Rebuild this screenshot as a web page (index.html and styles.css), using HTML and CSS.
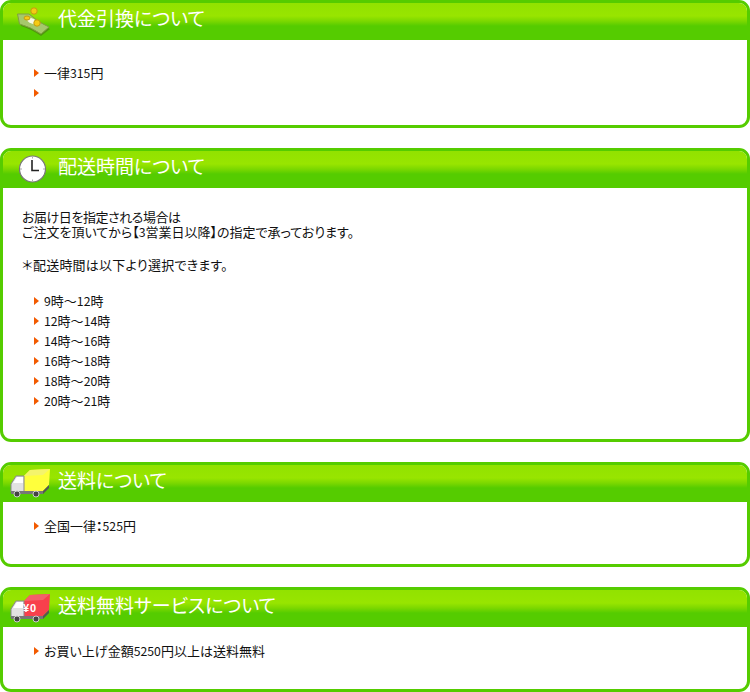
FILE: index.html
```html
<!DOCTYPE html>
<html lang="ja">
<head>
<meta charset="utf-8">
<title>配送について</title>
<link rel="stylesheet" href="styles.css">
</head>
<body>
<section class="card card-cod">
  <h2 class="head">
    <svg class="icon" width="40" height="36" viewBox="0 0 40 36"><path d="M9 14 L20 14 Q30 22 40 26 L31 33 Q21 26 11 23 Z" fill="#4f8a10" opacity=".8"/><path d="M7.500 11 L19 11 Q29 20 39 24 L31 31 Q21 24 9.500 21 Z" fill="#a6c86c" stroke="#7f9f42"/><ellipse cx="22" cy="18" rx="5" ry="2.500" fill="#f6f9e6" transform="rotate(25 22 18)"/><circle cx="24" cy="8" r="3.200" fill="#f5cb14" stroke="#c49c10"/><ellipse cx="17" cy="15" rx="3" ry="2" fill="#f5cb14" stroke="#c49c10"/><circle cx="27" cy="20" r="3.200" fill="#f5cb14" stroke="#c49c10"/></svg>
    <span class="title">代金引換について</span>
  </h2>
  <div class="body">
    <ul class="list">
      <li>一律<span class="num">315</span>円</li>
      <li></li>
    </ul>
  </div>
</section>

<section class="card card-time">
  <h2 class="head">
    <svg class="icon" width="40" height="36" viewBox="0 0 40 36"><circle cx="22.500" cy="18" r="13" fill="#fff" stroke="#777" stroke-width="1.200"/><path d="M22 9 V19.500 H29" fill="none" stroke="#222" stroke-width="1.600"/><path d="M22.500 5.500v2M22.500 28.500v2M10 18h2M33 18h2" stroke="#aaa"/></svg>
    <span class="title">配送時間について</span>
  </h2>
  <div class="body">
    <p class="note"><span class="tight">お届け日を指定される場合は</span><br>ご注文を頂いてから【<span class="num">3</span>営業日以降】の指定で承っております。</p>
    <p class="note wide">＊配送時間は以下より選択できます。</p>
    <ul class="list">
      <li><span class="num">9</span>時～<span class="num">12</span>時</li>
      <li><span class="num">12</span>時～<span class="num">14</span>時</li>
      <li><span class="num">14</span>時～<span class="num">16</span>時</li>
      <li><span class="num">16</span>時～<span class="num">18</span>時</li>
      <li><span class="num">18</span>時～<span class="num">20</span>時</li>
      <li><span class="num">20</span>時～<span class="num">21</span>時</li>
    </ul>
  </div>
</section>

<section class="card card-fee">
  <h2 class="head">
    <svg class="icon" width="40" height="36" viewBox="0 0 40 36"><path d="M14 11 L20 5 L40 4 L39 20 L33 26 H14 Z" fill="#ffff3c"/><path d="M20 5 L40 4 L33 10 L14 11 Z" fill="#f4f46c"/><path d="M33 26 L39 20 V23 L33 29 Z" fill="#555"/><path d="M1 27 V19 L6 11 H14 V27 Z" fill="#e2e2e2" stroke="#888"/><path d="M3 18 L7 12 H13 V18 Z" fill="#fff"/><path d="M1 26 H33 V29 H1 Z" fill="#777"/><circle cx="7" cy="29" r="3" fill="#444" stroke="#ccc"/><circle cx="26" cy="29" r="3" fill="#444" stroke="#ccc"/></svg>
    <span class="title">送料について</span>
  </h2>
  <div class="body">
    <ul class="list">
      <li>全国一律<span class="colon">：</span><span class="num">525</span>円</li>
    </ul>
  </div>
</section>

<section class="card card-free">
  <h2 class="head">
    <svg class="icon" width="40" height="36" viewBox="0 0 40 36"><path d="M14 11 L20 5 L40 4 L39 20 L33 26 H14 Z" fill="#f8404c"/><path d="M20 5 L40 4 L33 10 L14 11 Z" fill="#f4606a"/><path d="M33 26 L39 20 V23 L33 29 Z" fill="#555"/><path d="M1 27 V19 L6 11 H14 V27 Z" fill="#e2e2e2" stroke="#888"/><path d="M3 18 L7 12 H13 V18 Z" fill="#fff"/><path d="M1 26 H33 V29 H1 Z" fill="#777"/><circle cx="7" cy="29" r="3" fill="#444" stroke="#ccc"/><circle cx="26" cy="29" r="3" fill="#444" stroke="#ccc"/><text x="13" y="22" class="yen">¥0</text></svg>
    <span class="title">送料無料サービスについて</span>
  </h2>
  <div class="body">
    <ul class="list">
      <li>お買い上げ金額<span class="num">5250</span>円以上は送料無料</li>
    </ul>
  </div>
</section>
</body>
</html>
```
FILE: styles.css
```css
html, body { margin: 0; padding: 0; background: #fff; }
body {
  width: 750px;
  font-family: "Noto Sans CJK JP", "Liberation Sans", sans-serif;
  font-size: 13px;
  font-feature-settings: "palt";
  color: #111;
}
.card {
  box-sizing: border-box;
  width: 750px;
  border: 3px solid #55cc00;
  border-radius: 11px;
  overflow: hidden;
  margin: 0 0 20px;
}
.card-cod { height: 128px; }
.card-time { height: 294px; }
.card-fee { height: 105px; }
.card-free { height: 105px; margin-bottom: 0; }

.head {
  display: flex;
  align-items: flex-start;
  gap: 8px;
  height: 37px;
  margin: 0;
  padding: 0 0 0 7px;
  font-size: 19px;
  font-weight: 400;
  color: #fff;
  background: linear-gradient(#92e200 0, #98e500 13px, #7cd800 18px, #55cc00 23px);
}
.icon { flex: none; }
.title { line-height: 30px; }
.yen { font: bold 11px "Liberation Sans", sans-serif; fill: #fff; letter-spacing: 1px; }

.num { font-size: 12.25px; line-height: 0; }
.colon { font-weight: 700; }
.tight { letter-spacing: -.45px; }
.wide { letter-spacing: .24px; }

.body { padding: 21px 19px 0; }
.note { margin: 0 0 18px; line-height: 15px; }
.note + .note { margin-bottom: 19px; }
.list { list-style: none; margin: 0; padding: 0 0 0 12px; }
.list li {
  position: relative;
  height: 20px;
  line-height: 20px;
  padding-left: 10px;
}
.list li::before {
  content: "";
  position: absolute;
  left: 0;
  top: 6px;
  border-style: solid;
  border-width: 4px 0 4px 5px;
  border-color: transparent transparent transparent #f25a00;
}
.card-cod .body { padding-top: 23px; }
.card-fee .body, .card-free .body { padding-top: 14px; }
```
